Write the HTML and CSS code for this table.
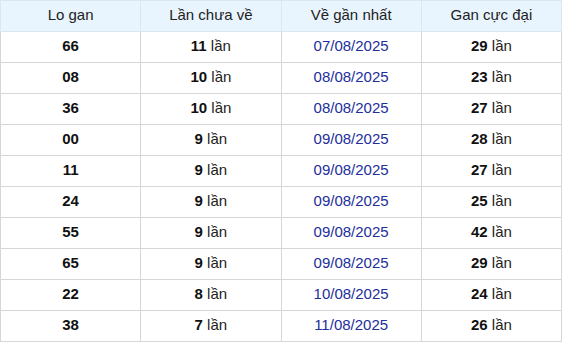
FILE: index.html
```html
<!DOCTYPE html>
<html lang="vi">
<head>
  <meta charset="UTF-8" />
  <meta name="viewport" content="width=device-width, initial-scale=1.0"/>
  <title>Lo gan</title>
  <link rel="stylesheet" href="styles.css">
</head>
<body>
  <table class="gan-table">
    <thead>
      <tr>
        <th>Lo gan</th>
        <th>Lần chưa về</th>
        <th>Về gần nhất</th>
        <th>Gan cực đại</th>
      </tr>
    </thead>
    <tbody>
      <tr><td><b>66</b></td><td><b>11</b> lần</td><td class="date">07/08/2025</td><td><b>29</b> lần</td></tr>
      <tr><td><b>08</b></td><td><b>10</b> lần</td><td class="date">08/08/2025</td><td><b>23</b> lần</td></tr>
      <tr><td><b>36</b></td><td><b>10</b> lần</td><td class="date">08/08/2025</td><td><b>27</b> lần</td></tr>
      <tr><td><b>00</b></td><td><b>9</b> lần</td><td class="date">09/08/2025</td><td><b>28</b> lần</td></tr>
      <tr><td><b>11</b></td><td><b>9</b> lần</td><td class="date">09/08/2025</td><td><b>27</b> lần</td></tr>
      <tr><td><b>24</b></td><td><b>9</b> lần</td><td class="date">09/08/2025</td><td><b>25</b> lần</td></tr>
      <tr><td><b>55</b></td><td><b>9</b> lần</td><td class="date">09/08/2025</td><td><b>42</b> lần</td></tr>
      <tr><td><b>65</b></td><td><b>9</b> lần</td><td class="date">09/08/2025</td><td><b>29</b> lần</td></tr>
      <tr><td><b>22</b></td><td><b>8</b> lần</td><td class="date">10/08/2025</td><td><b>24</b> lần</td></tr>
      <tr><td><b>38</b></td><td><b>7</b> lần</td><td class="date">11/08/2025</td><td><b>26</b> lần</td></tr>
    </tbody>
  </table>
</body>
</html>
```

FILE: styles.css
```css
* {
  box-sizing: border-box;
  margin: 0;
  padding: 0;
}

body {
  font-family: 'Liberation Sans', Arial, sans-serif;
  background: #fff;
  color: #222;
}

.gan-table {
  width: 562px;
  border-collapse: collapse;
  table-layout: fixed;
  font-size: 15px;
  line-height: 17px;
}

.gan-table th,
.gan-table td {
  height: 31px;
  border: 1px solid #d6d6d6;
  text-align: center;
  vertical-align: middle;
  padding: 0 0 3px;
}

.gan-table th {
  background-color: #e9f5fe;
  font-weight: normal;
  color: #222;
  border-color: #dbe6ef;
}

.gan-table b {
  color: #111;
}

.gan-table .date {
  color: #222e9c;
}
```
